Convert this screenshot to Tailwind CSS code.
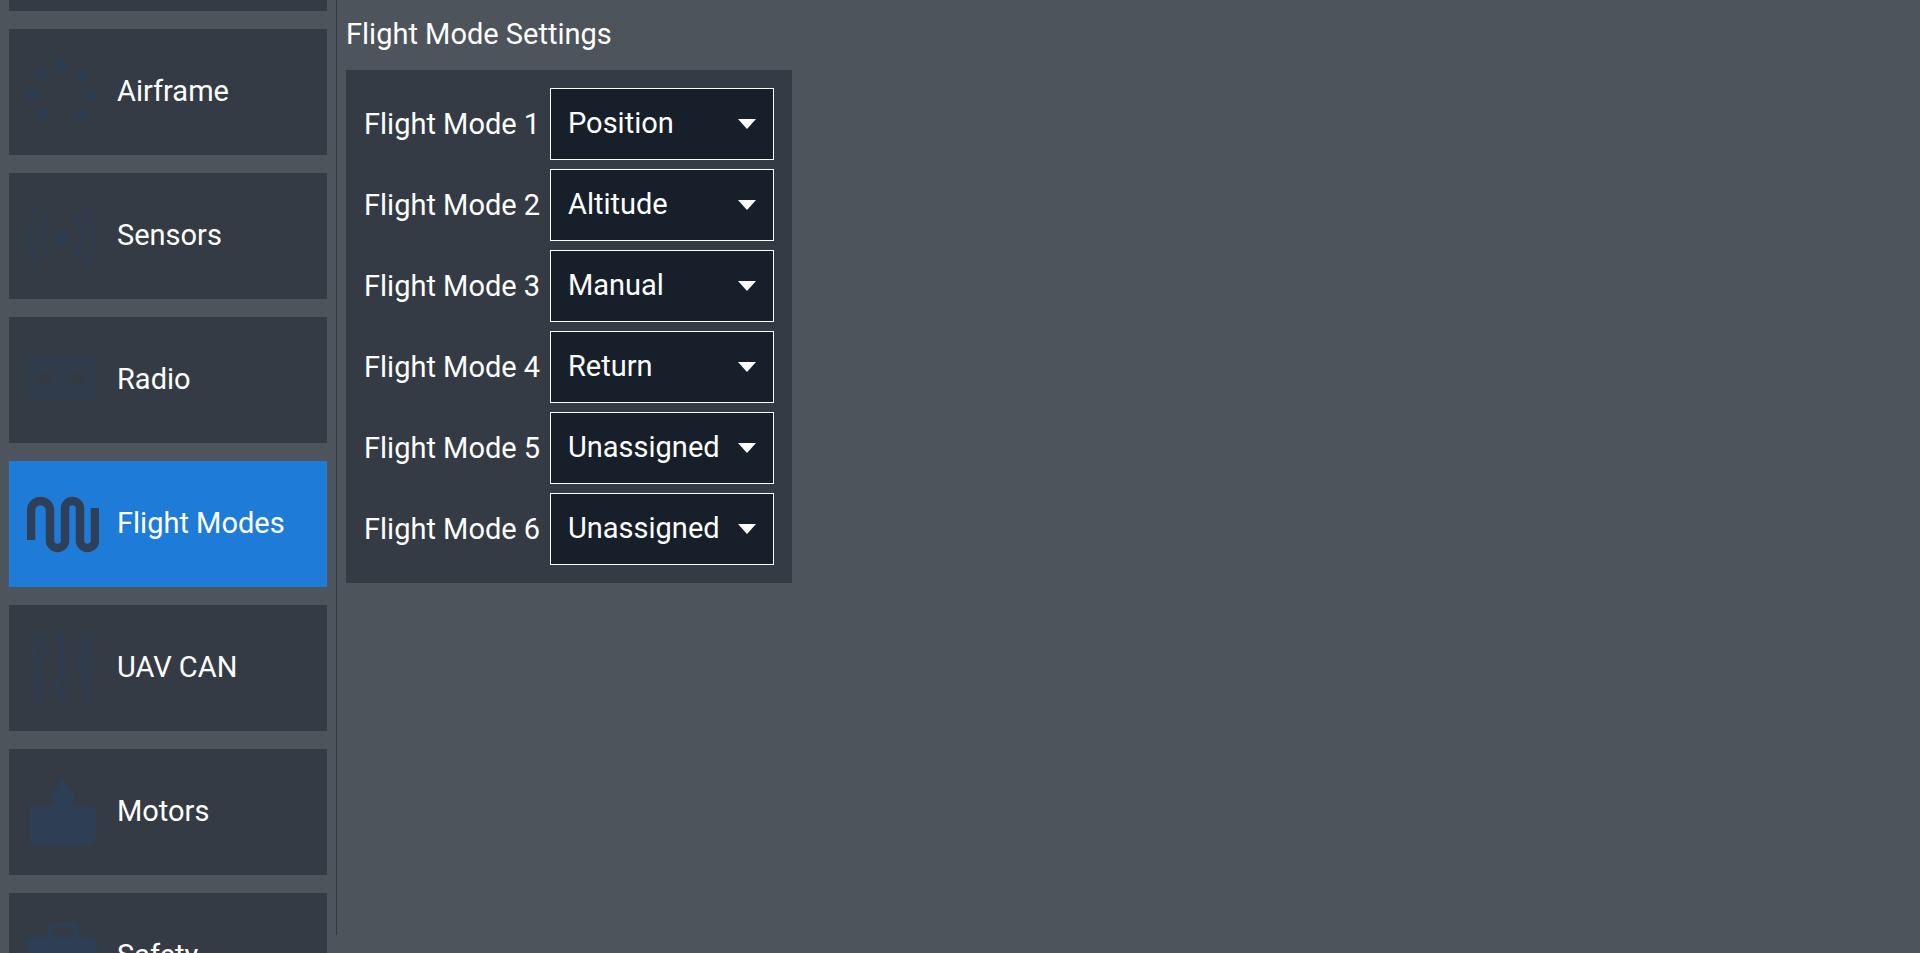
<!DOCTYPE html>
<html lang="en">
<head>
    <meta charset="UTF-8">
    <title>Flight Mode Settings</title>
    <script src="https://cdn.jsdelivr.net/npm/@tailwindcss/browser@4"></script>
</head>
<body class="bg-[#4d545c] font-['Roboto',sans-serif] text-white overflow-hidden">
    <div class="flex h-[953px] overflow-hidden">
        <!-- Sidebar -->
        <div class="w-[336px] h-full overflow-hidden pl-[9px] pr-[9px] shrink-0">
            <div class="flex flex-col gap-[18px] mt-[-115px]">
                <div class="h-[126px] bg-[#343b44] shrink-0"></div>

                <div class="h-[126px] bg-[#343b44] shrink-0 flex items-center pl-[18px] gap-[18px] text-[29px]">
                    <svg class="w-[72px] h-[72px] shrink-0 blur-[1.5px]" viewBox="0 0 72 72" fill="#2e3c4f">
                        <circle cx="35" cy="10" r="7"/><circle cx="15" cy="19" r="7"/><circle cx="55" cy="19" r="7"/>
                        <circle cx="6" cy="39" r="7"/><circle cx="63" cy="39" r="7"/><circle cx="15" cy="59" r="7"/><circle cx="55" cy="59" r="7"/>
                    </svg>
                    <span>Airframe</span>
                </div>

                <div class="h-[126px] bg-[#343b44] shrink-0 flex items-center pl-[18px] gap-[18px] text-[29px]">
                    <svg class="w-[72px] h-[72px] shrink-0 blur-[1.5px]" viewBox="0 0 72 72" fill="none" stroke="#2f3c4e" stroke-width="5">
                        <circle cx="35" cy="37" r="8" fill="#2e3c4f" stroke="none"/>
                        <path d="M22 17C13 29 13 45 22 57M48 17C57 29 57 45 48 57"/>
                        <path d="M11 7C1 26 1 48 11 67M59 7C69 26 69 48 59 67"/>
                    </svg>
                    <span>Sensors</span>
                </div>

                <div class="h-[126px] bg-[#343b44] shrink-0 flex items-center pl-[18px] gap-[18px] text-[29px]">
                    <svg class="w-[72px] h-[72px] shrink-0 blur-[1.5px]" viewBox="0 0 72 72">
                        <rect x="1" y="11" width="69" height="45" rx="4" fill="#303c4c"/>
                        <circle cx="18" cy="35" r="8" fill="#343a43"/><circle cx="51" cy="35" r="8" fill="#343a43"/>
                    </svg>
                    <span>Radio</span>
                </div>

                <div class="h-[126px] bg-[#1e7cd8] shrink-0 flex items-center pl-[18px] gap-[18px] text-[29px]">
                    <svg class="w-[72px] h-[72px] shrink-0 blur-[0.5px]" viewBox="0 0 72 72" fill="none" stroke="#2f3f57" stroke-width="8.5">
                        <path d="M4 52V22.5A9.5 9.5 0 0 1 23 22.5V52.5A7.5 7.5 0 0 0 38 52.5V20.5A7.5 7.5 0 0 1 53 20.5V52.5A7.5 7.5 0 0 0 68 52.5V20"/>
                    </svg>
                    <span>Flight Modes</span>
                </div>

                <div class="h-[126px] bg-[#343b44] shrink-0 flex items-center pl-[18px] gap-[18px] text-[29px]">
                    <svg class="w-[72px] h-[72px] shrink-0 blur-[1px]" viewBox="0 0 72 72" fill="none" stroke="#2f3d50" stroke-width="5">
                        <path d="M11 1V70M35 1V70M59 1V70"/>
                        <circle cx="11" cy="20" r="6" fill="#343b44"/><circle cx="35" cy="52" r="6" fill="#343b44"/><circle cx="59" cy="33" r="6" fill="#343b44"/>
                    </svg>
                    <span>UAV CAN</span>
                </div>

                <div class="h-[126px] bg-[#343b44] shrink-0 flex items-center pl-[18px] gap-[18px] text-[29px]">
                    <svg class="w-[72px] h-[72px] shrink-0 blur-[1px]" viewBox="0 0 72 72" fill="#2e3f55">
                        <path d="M36 2L49 20L44 30H28L23 20Z"/>
                        <path d="M3 34Q3 30 7 30H65Q69 30 69 34V60Q69 70 59 70H13Q3 70 3 60Z"/>
                    </svg>
                    <span>Motors</span>
                </div>

                <div class="h-[126px] bg-[#343b44] shrink-0 flex items-center pl-[18px] gap-[18px] text-[29px]">
                    <svg class="w-[72px] h-[72px] shrink-0 blur-[1px]" viewBox="0 0 72 72" fill="#2e3f55">
                        <rect x="23" y="5" width="26" height="16" rx="3" fill="none" stroke="#2e3f55" stroke-width="5"/>
                        <rect x="1" y="17" width="69" height="50" rx="5"/>
                    </svg>
                    <span>Safety</span>
                </div>
            </div>
        </div>

        <!-- Divider -->
        <div class="w-px h-[935px] bg-[#343b44] shrink-0"></div>

        <!-- Settings -->
        <div class="pl-[9px] flex flex-col items-start">
            <h1 class="text-[29px] leading-[34px] h-[70px] pt-[17px]">Flight Mode Settings</h1>
            <div class="bg-[#343b44] p-[18px] flex flex-col gap-[9px] w-[446px] text-[29px]">
                <div class="flex items-center justify-between">
                    <span class="pt-[2px]">Flight Mode 1</span>
                    <div class="w-[224px] h-[72px] border border-white bg-[#171f2a] flex items-center justify-between pl-[17px] pr-[17px]">
                        <span>Position</span>
                        <span class="w-0 h-0 border-l-[9px] border-r-[9px] border-t-[10px] border-l-transparent border-r-transparent border-t-white blur-[0.6px]"></span>
                    </div>
                </div>
                <div class="flex items-center justify-between">
                    <span class="pt-[2px]">Flight Mode 2</span>
                    <div class="w-[224px] h-[72px] border border-white bg-[#171f2a] flex items-center justify-between pl-[17px] pr-[17px]">
                        <span>Altitude</span>
                        <span class="w-0 h-0 border-l-[9px] border-r-[9px] border-t-[10px] border-l-transparent border-r-transparent border-t-white blur-[0.6px]"></span>
                    </div>
                </div>
                <div class="flex items-center justify-between">
                    <span class="pt-[2px]">Flight Mode 3</span>
                    <div class="w-[224px] h-[72px] border border-white bg-[#171f2a] flex items-center justify-between pl-[17px] pr-[17px]">
                        <span>Manual</span>
                        <span class="w-0 h-0 border-l-[9px] border-r-[9px] border-t-[10px] border-l-transparent border-r-transparent border-t-white blur-[0.6px]"></span>
                    </div>
                </div>
                <div class="flex items-center justify-between">
                    <span class="pt-[2px]">Flight Mode 4</span>
                    <div class="w-[224px] h-[72px] border border-white bg-[#171f2a] flex items-center justify-between pl-[17px] pr-[17px]">
                        <span>Return</span>
                        <span class="w-0 h-0 border-l-[9px] border-r-[9px] border-t-[10px] border-l-transparent border-r-transparent border-t-white blur-[0.6px]"></span>
                    </div>
                </div>
                <div class="flex items-center justify-between">
                    <span class="pt-[2px]">Flight Mode 5</span>
                    <div class="w-[224px] h-[72px] border border-white bg-[#171f2a] flex items-center justify-between pl-[17px] pr-[17px]">
                        <span>Unassigned</span>
                        <span class="w-0 h-0 border-l-[9px] border-r-[9px] border-t-[10px] border-l-transparent border-r-transparent border-t-white blur-[0.6px]"></span>
                    </div>
                </div>
                <div class="flex items-center justify-between">
                    <span class="pt-[2px]">Flight Mode 6</span>
                    <div class="w-[224px] h-[72px] border border-white bg-[#171f2a] flex items-center justify-between pl-[17px] pr-[17px]">
                        <span>Unassigned</span>
                        <span class="w-0 h-0 border-l-[9px] border-r-[9px] border-t-[10px] border-l-transparent border-r-transparent border-t-white blur-[0.6px]"></span>
                    </div>
                </div>
            </div>
        </div>
    </div>
</body>
</html>
